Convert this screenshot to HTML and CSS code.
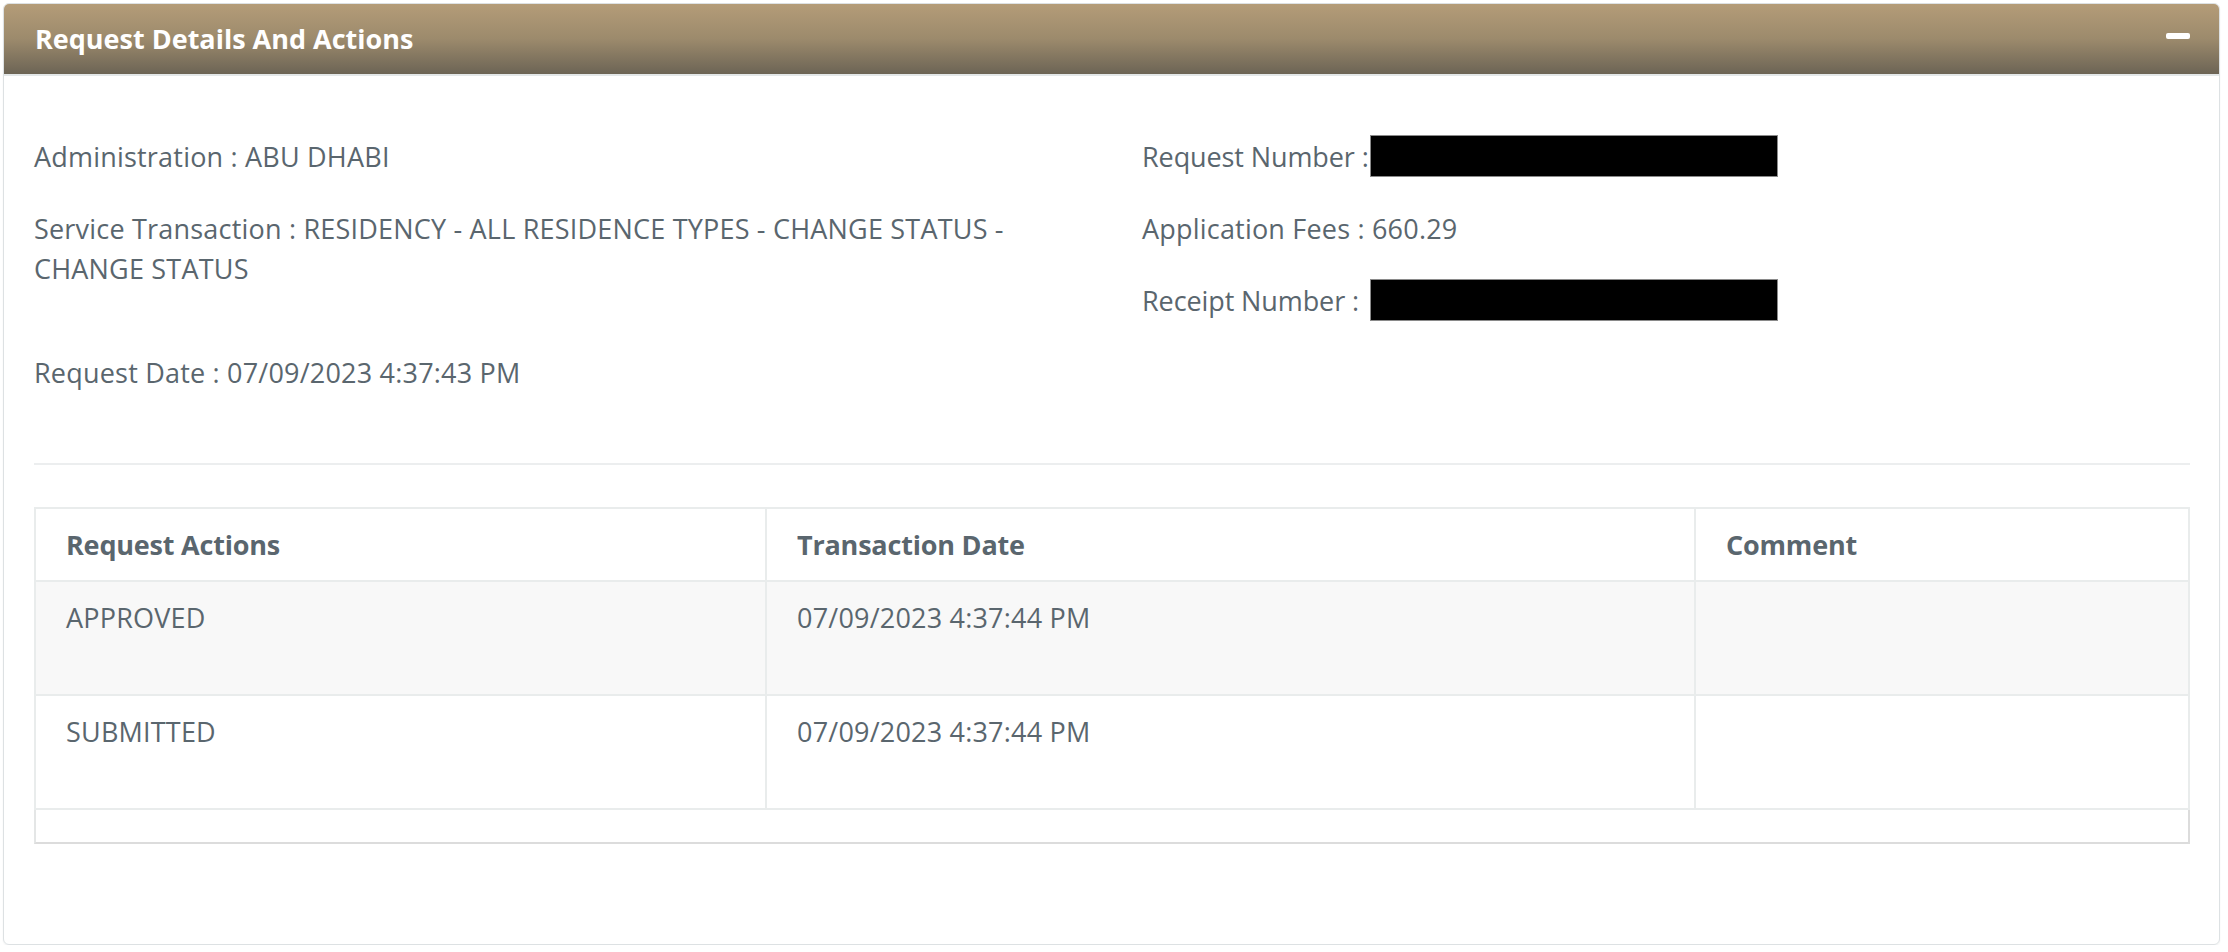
FILE: index.html
```html
<!DOCTYPE html>
<html lang="en">
<head>
<meta charset="utf-8">
<title>Request Details And Actions</title>
<link rel="stylesheet" href="styles.css">
</head>
<body>
<section class="panel">
  <header class="panel-head">
    <h2 class="panel-title">Request Details And Actions</h2>
    <span class="collapse-btn" aria-label="Collapse"></span>
  </header>
  <div class="panel-body">
    <div class="info">
      <div class="info-col">
        <p class="field">Administration : ABU DHABI</p>
        <p class="field field-tall">Service Transaction : RESIDENCY - ALL RESIDENCE TYPES - CHANGE STATUS -<br>CHANGE STATUS</p>
        <p class="field">Request Date : 07/09/2023 4:37:43 PM</p>
      </div>
      <div class="info-col">
        <p class="field"><span class="label">Request Number :</span><span class="redact"></span></p>
        <p class="field">Application Fees : 660.29</p>
        <p class="field"><span class="label">Receipt Number :</span><span class="redact"></span></p>
      </div>
    </div>
    <hr class="divider">
    <table class="actions">
      <colgroup>
        <col class="c1"><col class="c2"><col class="c3">
      </colgroup>
      <thead>
        <tr><th>Request Actions</th><th>Transaction Date</th><th>Comment</th></tr>
      </thead>
      <tbody>
        <tr class="odd"><td>APPROVED</td><td>07/09/2023 4:37:44 PM</td><td></td></tr>
        <tr><td>SUBMITTED</td><td>07/09/2023 4:37:44 PM</td><td></td></tr>
      </tbody>
    </table>
    <div class="table-foot"></div>
  </div>
</section>
</body>
</html>
```

FILE: styles.css
```css
* { box-sizing: border-box; }
html, body { margin: 0; padding: 0; background: #ffffff; }
body {
  font-family: "Open Sans", "Noto Sans", sans-serif;
  color: #5a666e;
}
.panel {
  margin: 3px 8px 0 3px;
  width: 2217px;
  height: 942px;
  border: 1px solid #dde1e3;
  border-radius: 6px;
  overflow: hidden;
  box-shadow: 0 1px 2px rgba(0,0,0,0.06);
}
.panel-head {
  height: 72px;
  display: flex;
  align-items: center;
  justify-content: space-between;
  padding: 0 29px 0 31px;
  background: linear-gradient(to bottom, #b49c78 0%, #9c8a6c 50%, #6c6455 100%);
  border-bottom: 2px solid #e3e7e8;
}
.panel-title {
  margin: 0;
  font-size: 27px;
  line-height: 36px;
  font-weight: 700;
  color: #ffffff;
}
.collapse-btn {
  width: 24px;
  height: 6px;
  border-radius: 2px;
  background: #ffffff;
  margin-top: -6px;
}
.panel-body {
  padding: 61px 29px 0 30px;
}
.info {
  display: grid;
  grid-template-columns: 1fr 1fr;
  column-gap: 60px;
}
.field {
  margin: 0 0 32px 0;
  font-size: 27px;
  line-height: 40px;
  letter-spacing: 0.2px;
}
.field-tall { min-height: 112px; }
.label {
  display: inline-block;
  width: 228px;
  white-space: nowrap;
  letter-spacing: -0.1px;
}
.redact {
  display: inline-block;
  width: 408px;
  height: 42px;
  background: #000000;
  border: 1px solid #8a8a8a;
  vertical-align: top;
  margin-top: -2px;
}
.divider {
  margin: 38px 0 42px 0;
  border: 0;
  border-top: 2px solid #eceeef;
  height: 0;
}
.actions {
  width: 100%;
  border-collapse: collapse;
  table-layout: fixed;
  border: 2px solid #e9ecec;
}
.c1 { width: 731px; }
.c2 { width: 929px; }
.actions th, .actions td {
  border: 2px solid #e9ecec;
  text-align: left;
  vertical-align: top;
  padding: 17px 30px 0 30px;
  font-size: 27px;
  line-height: 38px;
}
.actions th {
  height: 73px;
  font-weight: 700;
  color: #5a666e;
  letter-spacing: -0.2px;
}
.actions td {
  height: 114px;
  font-weight: 400;
  letter-spacing: 0.2px;
}
.actions tr.odd td { background: #f8f8f8; }
.table-foot {
  height: 34px;
  border: 2px solid #dcdcdc;
  border-top: 0;
  border-left-color: #e4e6e6;
}
```
